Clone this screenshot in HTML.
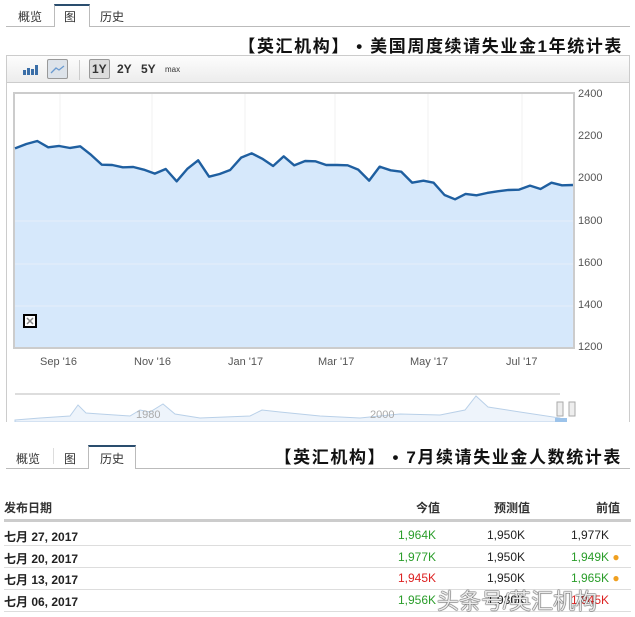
<!DOCTYPE html>
<html><head><meta charset="utf-8"><style>
*{margin:0;padding:0;box-sizing:border-box}
body{width:635px;height:617px;background:#fff;font-family:"Liberation Sans","Noto Sans CJK SC",sans-serif;position:relative;overflow:hidden;color:#222}
.abs{position:absolute}
.tab{position:absolute;font-size:12px;color:#333}
.title{position:absolute;right:13px;font-size:17px;font-weight:bold;color:#111;white-space:nowrap;letter-spacing:1.6px}
.ylab{position:absolute;left:578px;font-size:11px;color:#555}
.xlab{position:absolute;top:356px;font-size:11px;color:#555}
.th{position:absolute;top:499px;font-size:12px;font-weight:bold;color:#333}
.row{position:absolute;left:4px;font-size:12px;font-weight:bold;color:#222}
.c{position:absolute;font-size:12px;text-align:right}
.line{position:absolute;left:4px;right:4px;height:1px;background:#ddd}
</style></head><body>
<div class="abs" style="left:6px;top:26px;width:624px;height:1px;background:#bbb"></div>
<div class="abs" style="left:54px;top:4px;width:36px;height:23px;border:1px solid #bbb;border-bottom:none;border-top:2px solid #2a4d6e;background:#fff"></div>
<div class="tab" style="left:18px;top:8px">概览</div>
<div class="tab" style="left:64px;top:8px">图</div>
<div class="tab" style="left:100px;top:8px">历史</div>
<div class="title" style="top:32px;right:12px">【英汇机构】 • 美国周度续请失业金1年统计表</div>
<div class="abs" style="left:6px;top:55px;width:624px;height:370px;border:1px solid #ccc;border-bottom:none"></div>
<div class="abs" style="left:7px;top:56px;width:622px;height:27px;background:linear-gradient(#fdfdfd,#ececec);border-bottom:1px solid #ccc"></div>
<svg class="abs" style="left:22px;top:64px" width="18" height="12"><rect x="1" y="6" width="3" height="5" fill="#3b6fa8"/><rect x="5" y="4" width="3" height="7" fill="#3b6fa8"/><rect x="9" y="5" width="3" height="6" fill="#3b6fa8"/><rect x="13" y="1" width="3" height="10" fill="#3b6fa8"/></svg>
<div class="abs" style="left:47px;top:59px;width:21px;height:20px;border:1px solid #999;background:#dde3ea;border-radius:2px"></div>
<svg class="abs" style="left:49px;top:61px" width="17" height="16"><path d="M2 12 L7 7 L10 9 L15 5" stroke="#6a9ad0" stroke-width="1.3" fill="none"/></svg>
<div class="abs" style="left:79px;top:60px;width:1px;height:20px;background:#ccc"></div>
<div class="abs" style="left:89px;top:59px;width:21px;height:20px;border:1px solid #999;background:#ddd;border-radius:2px"></div>
<div class="abs" style="left:92px;top:62px;font-size:12px;font-weight:bold;color:#333">1Y</div>
<div class="abs" style="left:117px;top:62px;font-size:12px;font-weight:bold;color:#333">2Y</div>
<div class="abs" style="left:141px;top:62px;font-size:12px;font-weight:bold;color:#333">5Y</div>
<div class="abs" style="left:165px;top:65px;font-size:8px;color:#333">max</div>
<svg class="abs" style="left:0;top:0" width="635" height="430">
<rect x="14" y="93" width="560" height="255" fill="#fff" stroke="#ccc" stroke-width="2"/>
<g stroke="#f0f0f0" stroke-width="1">
<line x1="60" y1="94" x2="60" y2="347"/><line x1="152" y1="94" x2="152" y2="347"/><line x1="245" y1="94" x2="245" y2="347"/><line x1="335" y1="94" x2="335" y2="347"/><line x1="428" y1="94" x2="428" y2="347"/><line x1="522" y1="94" x2="522" y2="347"/>
</g>
<g transform="translate(15,80) scale(0.4052,0.3333) translate(-38,0)">
<polygon fill="#d6e8fb" points="38,801 38,205 66,192 93,183 120,202 147,198 174,204 199,199 226,225 252,254 278,255 304,262 330,261 356,269 383,281 410,267 437,304 463,267 490,241 517,290 543,282 569,270 596,233 622,220 648,236 675,258 701,229 727,256 754,243 780,244 806,255 833,255 859,256 885,269 912,302 938,260 965,271 991,275 1018,308 1046,302 1071,308 1098,345 1124,358 1150,342 1177,346 1203,339 1229,334 1256,330 1282,329 1309,317 1335,327 1362,308 1388,316 1415,315 1415,801"/>
<polyline fill="none" stroke="#1f5fa0" stroke-width="2.4" vector-effect="non-scaling-stroke" stroke-linejoin="round" points="38,205 66,192 93,183 120,202 147,198 174,204 199,199 226,225 252,254 278,255 304,262 330,261 356,269 383,281 410,267 437,304 463,267 490,241 517,290 543,282 569,270 596,233 622,220 648,236 675,258 701,229 727,256 754,243 780,244 806,255 833,255 859,256 885,269 912,302 938,260 965,271 991,275 1018,308 1046,302 1071,308 1098,345 1124,358 1150,342 1177,346 1203,339 1229,334 1256,330 1282,329 1309,317 1335,327 1362,308 1388,316 1415,315"/>
</g>
<g stroke="#e6eef8" stroke-width="1"><line x1="15" y1="306" x2="573" y2="306"/><line x1="15" y1="264" x2="573" y2="264"/><line x1="15" y1="221" x2="573" y2="221"/></g>
<rect x="24" y="315" width="12" height="12" fill="#fff" stroke="#000" stroke-width="2"/>
<path d="M27 318 L33 324 M33 318 L27 324" stroke="#888" stroke-width="1.5"/>
<line x1="15" y1="394" x2="560" y2="394" stroke="#bbb"/>
<path d="M15 420 L40 418 L70 416 L78 405 L86 413 L100 414 L130 416 L140 410 L150 412 L163 404 L175 414 L200 418 L250 416 L262 410 L280 412 L320 416 L360 418 L400 414 L440 415 L465 410 L476 396 L488 407 L520 412 L560 418 L560 422 L15 422Z" fill="#eef4fb" stroke="#b9d0e8"/>
<rect x="557" y="402" width="6" height="14" fill="#eee" stroke="#aaa"/><rect x="569" y="402" width="6" height="14" fill="#eee" stroke="#aaa"/>
<rect x="555" y="418" width="12" height="6" fill="#9cc3ea"/>
</svg>
<div class="abs" style="left:0;top:422px;width:635px;height:10px;background:#fff"></div>
<div class="abs" style="left:136px;top:409px;font-size:11px;color:#aaa">1980</div>
<div class="abs" style="left:370px;top:409px;font-size:11px;color:#aaa">2000</div>
<div class="ylab" style="top:88px">2400</div>
<div class="ylab" style="top:130px">2200</div>
<div class="ylab" style="top:172px">2000</div>
<div class="ylab" style="top:215px">1800</div>
<div class="ylab" style="top:257px">1600</div>
<div class="ylab" style="top:299px">1400</div>
<div class="ylab" style="top:341px">1200</div>
<div class="xlab" style="left:40px">Sep '16</div>
<div class="xlab" style="left:134px">Nov '16</div>
<div class="xlab" style="left:228px">Jan '17</div>
<div class="xlab" style="left:318px">Mar '17</div>
<div class="xlab" style="left:410px">May '17</div>
<div class="xlab" style="left:506px">Jul '17</div>
<div class="abs" style="left:6px;top:468px;width:624px;height:1px;background:#bbb"></div>
<div class="abs" style="left:88px;top:445px;width:48px;height:24px;border:1px solid #bbb;border-bottom:none;border-top:2px solid #2a4d6e;background:#fff"></div>
<div class="abs" style="left:53px;top:448px;width:1px;height:16px;background:#ddd"></div>
<div class="tab" style="left:16px;top:450px">概览</div>
<div class="tab" style="left:64px;top:450px">图</div>
<div class="tab" style="left:100px;top:450px">历史</div>
<div class="title" style="top:443px">【英汇机构】 • 7月续请失业金人数统计表</div>
<div class="th" style="left:4px">发布日期</div>
<div class="th" style="left:416px">今值</div>
<div class="th" style="left:494px">预测值</div>
<div class="th" style="left:596px">前值</div>
<div class="line" style="top:519px;height:3px;background:#ccc"></div>
<div class="row" style="top:528px">七月 27, 2017</div>
<div class="row" style="top:550px">七月 20, 2017</div>
<div class="row" style="top:571px">七月 13, 2017</div>
<div class="row" style="top:593px">七月 06, 2017</div>
<div class="line" style="top:545px"></div>
<div class="line" style="top:567px"></div>
<div class="line" style="top:589px"></div>
<div class="line" style="top:611px"></div>
<div class="c" style="left:398px;top:528px;color:#2a9d2a">1,964K</div>
<div class="c" style="left:398px;top:550px;color:#2a9d2a">1,977K</div>
<div class="c" style="left:398px;top:571px;color:#d22">1,945K</div>
<div class="c" style="left:398px;top:593px;color:#2a9d2a">1,956K</div>
<div class="c" style="left:487px;top:528px">1,950K</div>
<div class="c" style="left:487px;top:550px">1,950K</div>
<div class="c" style="left:487px;top:571px">1,950K</div>
<div class="c" style="left:487px;top:593px">1,930K</div>
<div class="c" style="left:571px;top:528px">1,977K</div>
<div class="c" style="left:571px;top:550px;color:#2a9d2a">1,949K <span style="color:#f0a020">●</span></div>
<div class="c" style="left:571px;top:571px;color:#2a9d2a">1,965K <span style="color:#f0a020">●</span></div>
<div class="c" style="left:571px;top:593px;color:#d22">1,945K</div>
<div class="abs" style="left:437px;top:584px;font-size:22px;color:rgba(255,255,255,0.9);text-shadow:0 0 1px #333,0 0 1px #333,0 0 1px #333;white-space:nowrap">头条号/英汇机构</div>
</body></html>
